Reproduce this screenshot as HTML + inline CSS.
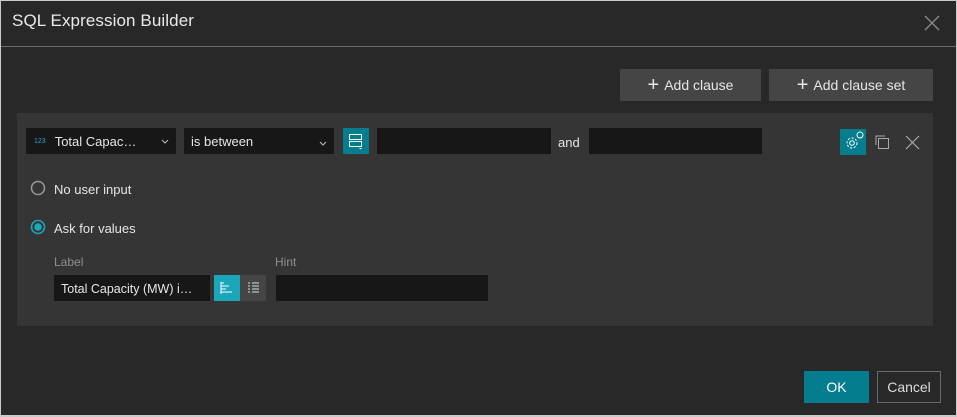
<!DOCTYPE html>
<html><head><meta charset="utf-8"><style>
*{box-sizing:border-box;margin:0;padding:0}
body{width:957px;height:417px;background:#c8c8c8;font-family:"Liberation Sans",sans-serif;color:#e6e6e6;overflow:hidden;position:relative}
.dlg{position:absolute;left:0;top:0;width:957px;height:417px;background:#282828;box-shadow:inset 1px 1px 0 #c8c8c8,inset -1px -2px 0 #c8c8c8}
.a{position:absolute}
.hdr{left:1px;top:0;width:955px;height:47px;border-bottom:1px solid #6a6a6a}
.title{left:12px;top:11px;font-size:17px;color:#eaeaea;letter-spacing:0.1px}
.btn{background:#454545;color:#e6e6e6;font-size:14px;display:flex;align-items:center;justify-content:center;gap:5px}
.inp{background:#171717}
.sel{background:#171717;font-size:13px;color:#e6e6e6;display:flex;align-items:center}
.panel{left:17px;top:113px;width:916px;height:213px;background:#353535}
.lbl{font-size:13px;color:#e6e6e6}
.teal{background:#047d8f}
</style></head><body>
<div class="dlg">
 <div class="a hdr"></div>
 <div class="a title">SQL Expression Builder</div>
 <svg class="a" style="left:924px;top:15px" width="16" height="16"><path d="M1 1L15 15M15 1L1 15" stroke="#8a8a8a" stroke-width="1.3"/></svg>

 <div class="a btn" style="left:620px;top:69px;width:141px;height:32px"><span style="font-size:20px">+</span>Add clause</div>
 <div class="a btn" style="left:769px;top:69px;width:164px;height:32px"><span style="font-size:20px">+</span>Add clause set</div>

 <div class="a panel"></div>
 <div class="a sel" style="left:26px;top:128px;width:150px;height:26px;padding-left:8px"><span style="font-size:7px;color:#2aa5c0;margin-right:9px">123</span>Total Capac…</div>
 <svg class="a" style="left:161px;top:139px" width="8" height="5"><path d="M1 1L4 4L7 1" stroke="#bbb" fill="none"/></svg>
 <div class="a sel" style="left:184px;top:128px;width:150px;height:26px;padding-left:7px">is between</div>
 <svg class="a" style="left:319px;top:141px" width="8" height="5"><path d="M1 1L4 4L7 1" stroke="#bbb" fill="none"/></svg>
 <div class="a teal" style="left:343px;top:128px;width:26px;height:26px"></div>
 <svg class="a" style="left:348px;top:133px" width="16" height="17"><rect x="1.5" y="1.5" width="12" height="5" fill="none" stroke="#fff"/><rect x="1.5" y="8.5" width="12" height="5" fill="none" stroke="#fff"/><path d="M11 15h3l-1.5 1.5z" fill="#fff"/></svg>
 <div class="a inp" style="left:377px;top:128px;width:174px;height:26px"></div>
 <div class="a lbl" style="left:558px;top:135px">and</div>
 <div class="a inp" style="left:589px;top:128px;width:173px;height:26px"></div>

 <div class="a teal" style="left:840px;top:129px;width:26px;height:26px"></div>
 <svg class="a" style="left:843px;top:131px" width="22" height="22"><circle cx="9" cy="12" r="2.3" fill="none" stroke="#fff"/><circle cx="9" cy="12" r="5" fill="none" stroke="#fff" stroke-dasharray="2.2 1.6"/><circle cx="17" cy="4" r="3" fill="#047d8f" stroke="#fff"/></svg>
 <svg class="a" style="left:874px;top:134px" width="16" height="16"><path d="M2 11V2h9" fill="none" stroke="#aaa"/><rect x="4.5" y="4.5" width="10" height="10" fill="none" stroke="#aaa"/></svg>
 <svg class="a" style="left:905px;top:135px" width="15" height="15"><path d="M1 1L14 14M14 1L1 14" stroke="#aaa" stroke-width="1.2"/></svg>

 <svg class="a" style="left:30px;top:180px" width="16" height="16"><circle cx="8" cy="8" r="6.5" fill="none" stroke="#9a9a9a" stroke-width="1.5"/></svg>
 <div class="a lbl" style="left:54px;top:182px">No user input</div>
 <svg class="a" style="left:30px;top:219px" width="16" height="16"><circle cx="8" cy="8" r="6.5" fill="none" stroke="#1ba6bc" stroke-width="1.6"/><circle cx="8" cy="8" r="3.8" fill="#1ba6bc"/></svg>
 <div class="a lbl" style="left:54px;top:221px">Ask for values</div>

 <div class="a" style="left:54px;top:255px;font-size:12px;color:#8e8e8e">Label</div>
 <div class="a" style="left:275px;top:255px;font-size:12px;color:#8e8e8e">Hint</div>
 <div class="a inp lbl" style="left:54px;top:275px;width:156px;height:26px;padding:7px 0 0 7px;font-size:12.5px">Total Capacity (MW) i…</div>
 <div class="a" style="left:214px;top:275px;width:26px;height:26px;background:#1ba6bc"></div>
 <svg class="a" style="left:220px;top:281px" width="14" height="14"><path d="M1 2h3M1 5h8M1 8h5M1 11h11M1 1v12" stroke="#fff" fill="none"/></svg>
 <div class="a" style="left:240px;top:275px;width:26px;height:26px;background:#454545"></div>
 <svg class="a" style="left:247px;top:281px" width="13" height="14"><path d="M1 2h2M5 2h7M1 5h2M5 5h7M1 8h2M5 8h7M1 11h2M5 11h7" stroke="#ddd"/></svg>
 <div class="a inp" style="left:276px;top:275px;width:212px;height:26px"></div>

 <div class="a" style="left:804px;top:371px;width:65px;height:32px;background:#047d8f;color:#fff;font-size:14px;display:flex;align-items:center;justify-content:center">OK</div>
 <div class="a" style="left:877px;top:371px;width:64px;height:32px;border:1px solid #6a6a6a;color:#ddd;font-size:14px;display:flex;align-items:center;justify-content:center">Cancel</div>
</div>
</body></html>
